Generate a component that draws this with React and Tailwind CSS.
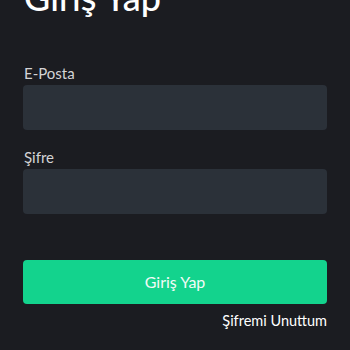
export default function App() {
  return (
    <div className="w-[350px] h-[350px] overflow-hidden bg-[#1b1c21] px-[23px]" style={{ fontFamily: "Lato, 'Noto Sans', sans-serif" }}>
      <h1 className="text-[36px] leading-none text-white font-medium -mt-[21px] pl-[1px]">Giriş Yap</h1>
      <div className="mt-[49px] flex flex-col">
        <label className="text-[15px] leading-[18px] text-[#d4d4d6] pl-[1px]">E-Posta</label>
        <div className="mt-[3px] h-[45px] rounded-[4px] bg-[#2b3139]" />
        <label className="mt-[18px] text-[15px] leading-[18px] text-[#d4d4d6] pl-[1px]">Şifre</label>
        <div className="mt-[3px] h-[45px] rounded-[4px] bg-[#2b3139]" />
        <button className="mt-[46px] h-[44px] rounded-[4px] bg-[#13d38d] text-[#f2fbf7] text-[16px]">Giriş Yap</button>
        <div className="mt-[8px] text-right text-[14.5px] leading-[18px] text-white">Şifremi Unuttum</div>
      </div>
    </div>
  );
}
